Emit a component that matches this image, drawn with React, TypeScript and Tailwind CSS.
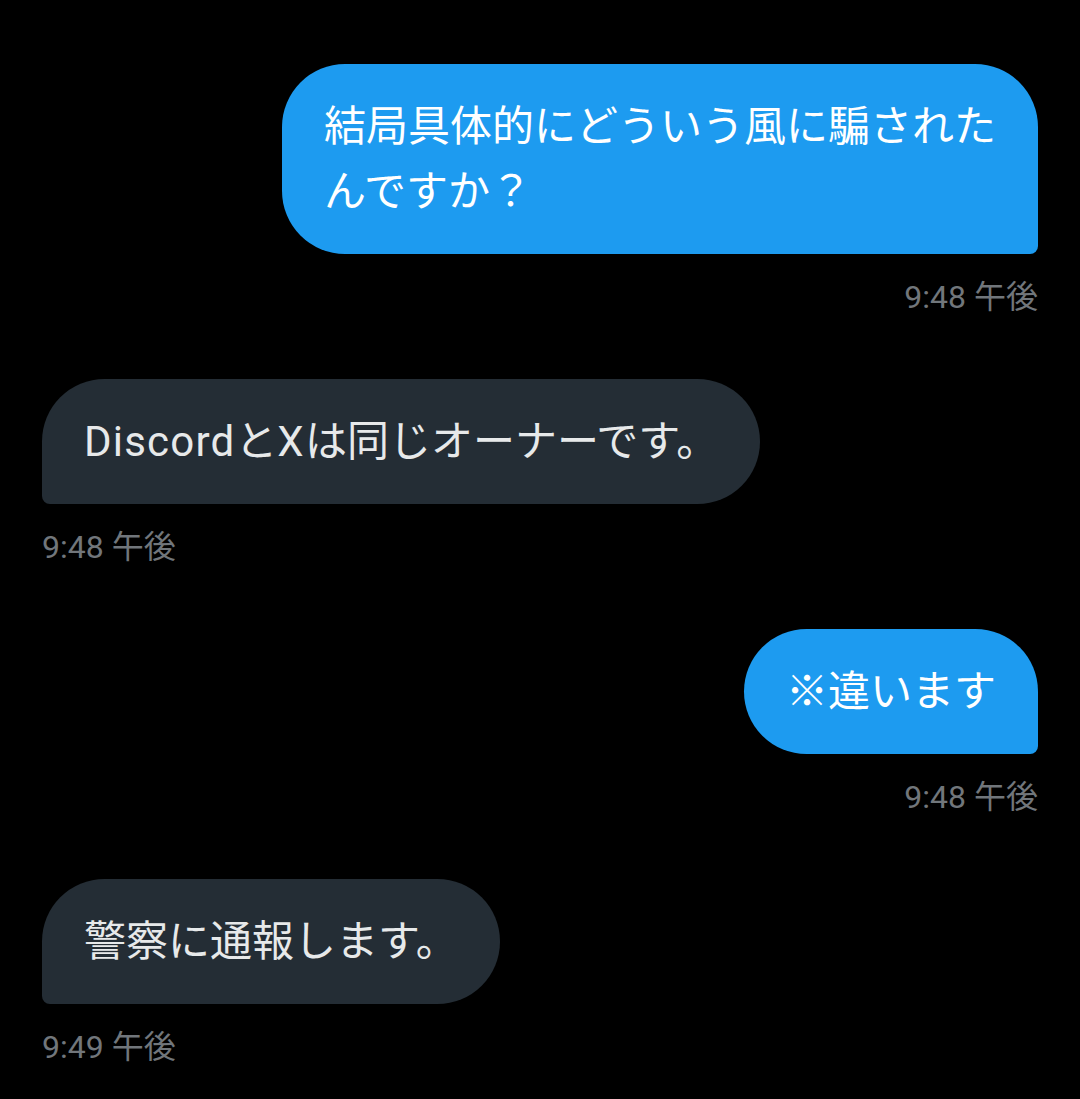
import React from "react";

type Msg = { content: React.ReactNode; mine: boolean; time: string };

const messages: Msg[] = [
  { content: "結局具体的にどういう風に騙されたんですか？", mine: true, time: "9:48 午後" },
  {
    content: (
      <>
        <span className="tracking-[1.2px]">Discord</span>と<span className="tracking-[1.2px]">X</span>は同じオーナーです。
      </>
    ),
    mine: false,
    time: "9:48 午後",
  },
  { content: "※違います", mine: true, time: "9:48 午後" },
  { content: "警察に通報します。", mine: false, time: "9:49 午後" },
];

export default function App() {
  return (
    <div
      className="w-[1080px] h-[1099px] bg-black overflow-hidden flex flex-col gap-[62px] px-[42px] pt-[64px]"
      style={{ fontFamily: 'Roboto, "Noto Sans CJK JP", sans-serif' }}
    >
      {messages.map((m, i) =>
        m.mine ? (
          <div key={i} className="flex flex-col items-end">
            <div className="max-w-[756px] bg-[#1d9bf0] text-white text-[42px] leading-[65px] px-[42px] py-[30px] rounded-[63px] rounded-br-[8px]">
              {m.content}
            </div>
            <div className="mt-[23px] text-[32px] leading-[40px] text-[#71767b]">{m.time}</div>
          </div>
        ) : (
          <div key={i} className="flex flex-col items-start">
            <div className="max-w-[756px] bg-[#242d35] text-[#e7e9ea] text-[42px] leading-[65px] px-[42px] py-[30px] rounded-[63px] rounded-bl-[8px]">
              {m.content}
            </div>
            <div className="mt-[23px] text-[32px] leading-[40px] text-[#71767b]">{m.time}</div>
          </div>
        )
      )}
    </div>
  );
}
